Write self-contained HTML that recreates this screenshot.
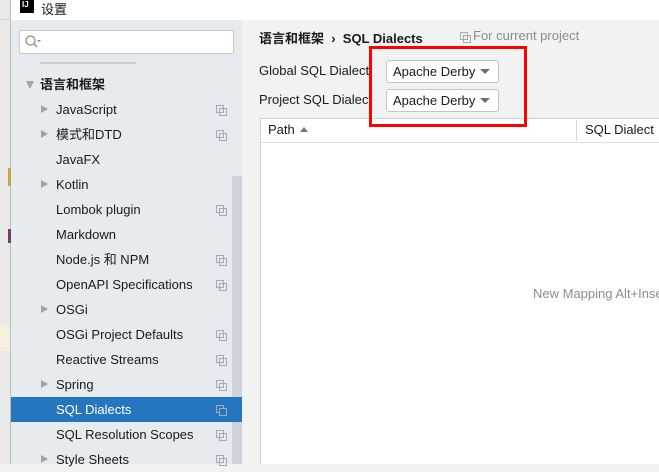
<!DOCTYPE html>
<html><head><meta charset="utf-8"><style>
*{margin:0;padding:0;box-sizing:border-box}
body{width:659px;height:464px;overflow:hidden;background:#f2f2f2;font-family:"Liberation Sans","Noto Sans CJK SC",sans-serif;font-size:13px;color:#1a1a1a;position:relative}
.abs{position:absolute}
.row{position:absolute;left:11px;width:221px;height:25px;line-height:25px}
.row .t{position:absolute;left:45px}
.row .a{position:absolute;left:30px;top:8px;width:0;height:0;border-left:7px solid #a0a4a8;border-top:4.5px solid transparent;border-bottom:4.5px solid transparent}
.cp{position:absolute;left:205px;top:8px;width:9px;height:9px}
.cp:before{content:"";position:absolute;left:0;top:0;width:6px;height:6px;border:1px solid #a5aab0}
.cp:after{content:"";position:absolute;left:3px;top:3px;width:6px;height:6px;border:1px solid #a5aab0;background:inherit}
.sel{background:#2675bf;color:#fff}
.dd{position:absolute;left:386px;width:113px;height:23px;background:#fff;border:1px solid #c4c4c4;border-radius:3px;line-height:21px;padding-left:6px}
.dd:after{content:"";position:absolute;right:8px;top:8px;border-top:5px solid #6e6e6e;border-left:5px solid transparent;border-right:5px solid transparent}
</style></head><body>
<div class="abs" style="left:0;top:0;width:11px;height:464px;background:#e9e9e9;border-right:1px solid #bdbdbd"></div>
<div class="abs" style="left:0;top:19px;width:10px;height:1px;background:#d0d0d0"></div>
<div class="abs" style="left:8px;top:168px;width:3px;height:18px;background:#c9a93d"></div>
<div class="abs" style="left:8px;top:229px;width:3px;height:14px;background:#7a3a6a"></div>
<div class="abs" style="left:0;top:325px;width:10px;height:26px;background:#f5f0dc"></div>
<div class="abs" style="left:11px;top:0;width:648px;height:20px;background:#fff"></div>
<div class="abs" style="left:20px;top:0;width:14px;height:13px;background:#000;color:#fff;font-size:8px;font-weight:bold;line-height:10px;padding-left:2px">IJ</div>
<div class="abs" style="left:41px;top:-1px;font-size:13px">设置</div>
<div class="abs" style="left:11px;top:20px;width:231px;height:444px;background:#e6ebf0"></div>
<div class="abs" style="left:232px;top:176px;width:10px;height:288px;background:#cdd2d8"></div>
<div class="abs" style="left:19px;top:30px;width:215px;height:24px;background:#fff;border:1px solid #c6c9cd;border-radius:3px"></div>
<svg class="abs" style="left:24px;top:34px" width="18" height="16"><circle cx="6.5" cy="6.5" r="4.5" fill="none" stroke="#888" stroke-width="1.2"/><line x1="10" y1="10" x2="13" y2="13" stroke="#888" stroke-width="1.3"/><path d="M13 6h4l-2 2z" fill="#888"/></svg>
<div class="abs" style="left:40px;top:62px;width:96px;height:2px;background:#c8cdd2"></div>
<div class="abs" style="left:26px;top:81px;border-top:8px solid #a0a4a8;border-left:4.5px solid transparent;border-right:4.5px solid transparent"></div>
<div class="abs" style="left:40px;top:75px;font-weight:bold;line-height:20px">语言和框架</div>
<div class="row" style="top:97px"><i class="a"></i><span class="t">JavaScript</span><i class="cp"></i></div>
<div class="row" style="top:122px"><i class="a"></i><span class="t">模式和DTD</span><i class="cp"></i></div>
<div class="row" style="top:147px"><span class="t">JavaFX</span></div>
<div class="row" style="top:172px"><i class="a"></i><span class="t">Kotlin</span></div>
<div class="row" style="top:197px"><span class="t">Lombok plugin</span><i class="cp"></i></div>
<div class="row" style="top:222px"><span class="t">Markdown</span></div>
<div class="row" style="top:247px"><span class="t">Node.js 和 NPM</span><i class="cp"></i></div>
<div class="row" style="top:272px"><span class="t">OpenAPI Specifications</span><i class="cp"></i></div>
<div class="row" style="top:297px"><i class="a"></i><span class="t">OSGi</span></div>
<div class="row" style="top:322px"><span class="t">OSGi Project Defaults</span><i class="cp"></i></div>
<div class="row" style="top:347px"><span class="t">Reactive Streams</span><i class="cp"></i></div>
<div class="row" style="top:372px"><i class="a"></i><span class="t">Spring</span><i class="cp"></i></div>
<div class="row sel" style="top:397px;width:231px"><span class="t">SQL Dialects</span><i class="cp" style="background:#2675bf"></i></div>
<div class="row" style="top:422px"><span class="t">SQL Resolution Scopes</span><i class="cp"></i></div>
<div class="row" style="top:447px"><i class="a"></i><span class="t">Style Sheets</span><i class="cp"></i></div>
<div class="abs" style="left:259px;top:28px;font-weight:bold">语言和框架 &nbsp;› &nbsp;SQL Dialects</div>
<i class="cp abs" style="left:460px;top:32px"></i>
<div class="abs" style="left:473px;top:28px;color:#8c8c8c">For current project</div>
<div class="abs" style="left:259px;top:63px">Global SQL Dialect</div>
<div class="abs" style="left:259px;top:92px">Project SQL Dialect</div>
<div class="dd" style="top:60px">Apache Derby</div>
<div class="dd" style="top:89px">Apache Derby</div>
<div class="abs" style="left:260px;top:118px;width:399px;height:346px;background:#fff;border-top:1px solid #d0d0d0;border-left:1px solid #d0d0d0"></div>
<div class="abs" style="left:261px;top:142px;width:398px;height:1px;background:#e0e0e0"></div>
<div class="abs" style="left:576px;top:120px;width:1px;height:21px;background:#d8d8d8"></div>
<div class="abs" style="left:268px;top:122px">Path</div>
<div class="abs" style="left:300px;top:127px;border-bottom:5px solid #777;border-left:4px solid transparent;border-right:4px solid transparent"></div>
<div class="abs" style="left:585px;top:122px">SQL Dialect</div>
<div class="abs" style="left:533px;top:286px;color:#8c8c8c;white-space:nowrap">New Mapping Alt+Insert</div>
<div class="abs" style="left:369px;top:46px;width:158px;height:81px;border:3px solid #f00"></div>
</body></html>
